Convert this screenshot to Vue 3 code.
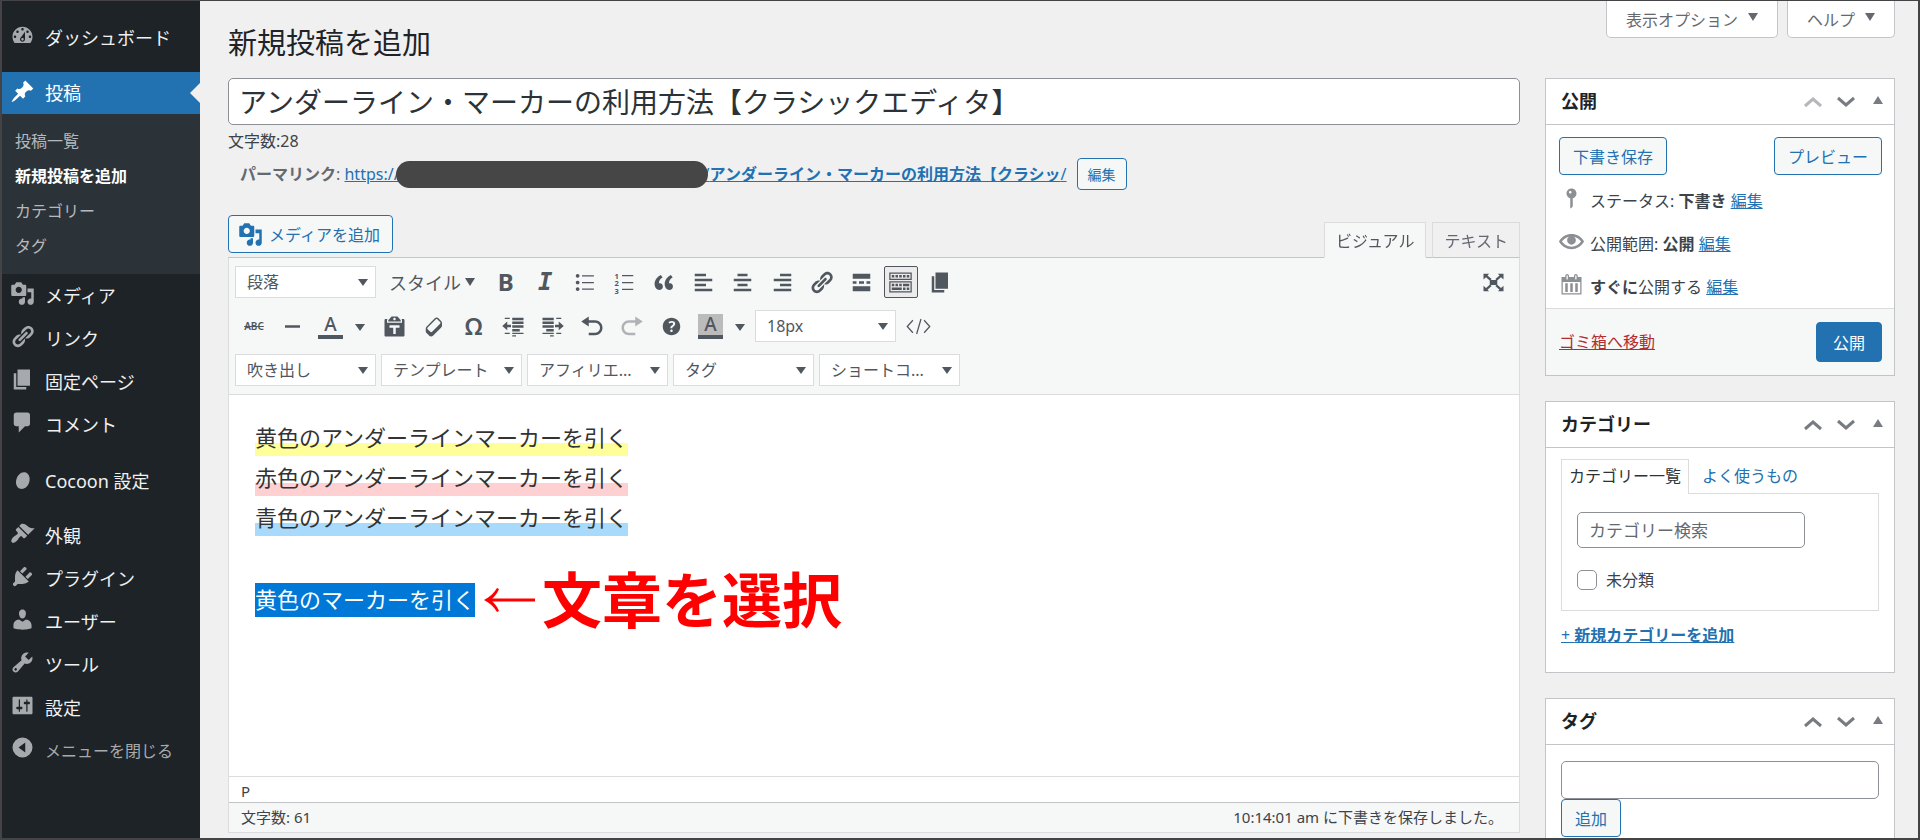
<script setup>
import { ref } from 'vue'

const icons = {
  dashboard: 'M3.76 16h12.48c1.1-1.37 1.76-3.11 1.76-5 0-4.42-3.58-8-8-8s-8 3.58-8 8c0 1.89.66 3.63 1.76 5zM10 4c.55 0 1 .45 1 1s-.45 1-1 1-1-.45-1-1 .45-1 1-1zM6 6c.55 0 1 .45 1 1s-.45 1-1 1-1-.45-1-1 .45-1 1-1zm8 0c.55 0 1 .45 1 1s-.45 1-1 1-1-.45-1-1 .45-1 1-1zm-5.37 5.55L12 7v6c0 1.1-.9 2-2 2s-2-.9-2-2c0-.57.24-1.08.63-1.45zM4 10c.55 0 1 .45 1 1s-.45 1-1 1-1-.45-1-1 .45-1 1-1zm12 0c.55 0 1 .45 1 1s-.45 1-1 1-1-.45-1-1 .45-1 1-1zm-5 3c0-.55-.45-1-1-1s-1 .45-1 1 .45 1 1 1 1-.45 1-1z',
  post: 'M10.44 3.02l1.82-1.82 6.36 6.35-1.83 1.82c-1.05-.68-2.48-.57-3.41.36l-.75.75c-.92.93-1.04 2.35-.35 3.41l-1.83 1.82-2.41-2.41-2.8 2.79c-.42.42-3.38 2.71-3.8 2.29s1.86-3.39 2.28-3.81l2.79-2.79L4.1 9.36l1.83-1.82c1.05.69 2.48.57 3.4-.36l.75-.75c.93-.92 1.05-2.35.36-3.41z',
  media: 'M13 11V4c0-.55-.45-1-1-1h-1.67L9 1H5L3.67 3H2c-.55 0-1 .45-1 1v7c0 .55.45 1 1 1h10c.55 0 1-.45 1-1zM7 4.5c1.38 0 2.5 1.12 2.5 2.5S8.38 9.5 7 9.5 4.5 8.38 4.5 7 5.62 4.5 7 4.5zM14 6h5v10.5c0 1.38-1.12 2.5-2.5 2.5S14 17.88 14 16.5s1.12-2.5 2.5-2.5c.17 0 .34.02.5.05V9h-3V6zm-4 8.05V13h2v3.5c0 1.38-1.12 2.5-2.5 2.5S7 17.88 7 16.5 8.12 14 9.5 14c.17 0 .34.02.5.05z',
  link: 'M17.74 2.76c1.68 1.69 1.68 4.41 0 6.1l-1.53 1.52c-1.12 1.12-2.7 1.47-4.14 1.09l2.62-2.61.76-.77.76-.76c.84-.84.84-2.2 0-3.04-.84-.85-2.2-.85-3.04 0l-.77.76-3.38 3.38c-.37-1.44-.02-3.02 1.1-4.14l1.52-1.53c1.69-1.68 4.42-1.68 6.1 0zM8.59 13.43l5.34-5.34c.42-.42.42-1.1 0-1.52-.44-.43-1.13-.39-1.53 0l-5.33 5.34c-.42.42-.42 1.1 0 1.52.44.43 1.13.39 1.52 0zm-.76 2.29l4.14-4.15c.38 1.44.03 3.02-1.09 4.14l-1.52 1.53c-1.69 1.68-4.41 1.68-6.1 0-1.68-1.68-1.68-4.42 0-6.1l1.53-1.52c1.12-1.12 2.7-1.47 4.14-1.1l-4.14 4.15c-.85.84-.85 2.2 0 3.05.84.84 2.2.84 3.04 0z',
  page: 'M6 15V2h10v13H6zm-1 1h8v2H3V5h2v11z',
  comment: 'M5 2h9c1.1 0 2 .9 2 2v7c0 1.1-.9 2-2 2h-2l-5 5v-5H5c-1.1 0-2-.9-2-2V4c0-1.1.9-2 2-2z',
  cocoon: 'M12.5 2.2c3.4 1 5 4.600 4.100 8.800-1 4.600-4.700 7.700-8.300 6.900C4.700 17 3.100 13.400 4.100 9.200 5.100 4.600 9 1.200 12.500 2.200z',
  appearance: 'M14.48 11.06L7.41 3.99l1.5-1.5c.5-.56 2.3-.47 3.51.32 1.21.8 1.43 1.28 2.91 2.1 1.18.64 2.45 1.26 4.45.85zm-.71.71L6.7 4.7 4.93 6.47c-.39.39-.39 1.02 0 1.41l1.06 1.06c.39.39.39 1.03 0 1.42-.6.6-1.43 1.11-2.21 1.69-.35.26-.7.53-1.01.84C1.43 14.23.4 16.08 1.4 17.07c.99 1 2.84-.03 4.18-1.36.31-.31.58-.66.85-1.02.57-.78 1.08-1.61 1.69-2.21.39-.39 1.02-.39 1.41 0l1.06 1.06c.39.39 1.02.39 1.41 0z',
  plugin: 'M13.11 4.36L9.87 7.6 8 5.73l3.24-3.24c.35-.34 1.05-.2 1.56.32.52.51.66 1.21.31 1.55zm-8 1.77l.91-1.12 9.01 9.01-1.19.84c-.71.71-2.63 1.16-3.82 1.16H6.14L4.9 17.26c-.59.59-1.54.59-2.12 0-.59-.58-.59-1.53 0-2.12l1.24-1.24v-3.88c0-1.13.4-3.19 1.09-3.89zm7.26 3.97l3.24-3.24c.34-.35 1.04-.21 1.55.31.52.51.66 1.21.31 1.55l-3.24 3.25z',
  user: 'M10 9.25c-2.27 0-2.73-3.44-2.73-3.44C7 4.02 7.82 2 9.97 2c2.16 0 2.98 2.02 2.71 3.81 0 0-.41 3.44-2.68 3.44zm0 2.57L12.72 10c2.39 0 4.52 2.33 4.52 4.53v2.49s-3.65 1.13-7.24 1.13c-3.65 0-7.24-1.13-7.24-1.13v-2.49c0-2.25 1.94-4.48 4.47-4.48z',
  tool: 'M16.68 9.77c-1.34 1.34-3.3 1.67-4.95.99l-5.41 6.52c-.99.99-2.59.99-3.58 0s-.99-2.59 0-3.57l6.52-5.42c-.68-1.65-.35-3.61.99-4.95 1.28-1.28 3.12-1.62 4.72-1.06l-2.89 2.89 2.82 2.82 2.86-2.87c.53 1.58.18 3.39-1.08 4.65zM3.81 16.21c.4.39 1.04.39 1.43 0 .4-.4.4-1.04 0-1.43-.39-.4-1.03-.4-1.43 0-.39.39-.39 1.03 0 1.43z',
  settings: 'M18 16V4c0-.55-.45-1-1-1H3c-.55 0-1 .45-1 1v12c0 .55.45 1 1 1h14c.55 0 1-.45 1-1zM8 11h1c.55 0 1 .45 1 1s-.45 1-1 1H8v1.5c0 .28-.22.5-.5.5s-.5-.22-.5-.5V13H6c-.55 0-1-.45-1-1s.45-1 1-1h1V5.500c0-.28.22-.5.5-.5s.5.22.5.5V11zm5-2h-1c-.55 0-1-.45-1-1s.45-1 1-1h1V5.500c0-.28.22-.5.5-.5s.5.22.5.5V7h1c.55 0 1 .45 1 1s-.45 1-1 1h-1v5.500c0 .28-.22.5-.5.5s-.5-.22-.5-.5V9z',
  collapse: 'M10 2a8 8 0 1 0 0 16 8 8 0 0 0 0-16zM12.200 6v8L6.800 10z',
  bullets: 'M4.500 3.200a1.500 1.500 0 1 0 .01 0zM4.500 8.500a1.500 1.500 0 1 0 .01 0zM4.500 13.800a1.500 1.500 0 1 0 .01 0zM8 4.200h9.500v1H8zM8 9.500h9.500v1H8zM8 14.800h9.500v1H8z',
  quote: 'M9.49 13.22c0-.74-.2-1.38-.61-1.9-.62-.78-1.83-.88-2.53-.72-.29-1.65 1.11-3.75 2.92-4.65L7.88 4c-2.73 1.3-5.42 4.28-4.96 8.05C3.21 14.43 4.59 16 6.54 16c.85 0 1.56-.25 2.12-.75s.83-1.18.83-2.03zm8.05 0c0-.74-.2-1.38-.61-1.9-.63-.78-1.83-.88-2.53-.72-.29-1.65 1.11-3.75 2.92-4.65L15.93 4c-2.73 1.3-5.41 4.28-4.95 8.05.29 2.38 1.66 3.95 3.61 3.95.85 0 1.56-.25 2.12-.75s.83-1.18.83-2.03z',
  left: 'M12 5V3H3v2h9zm5 4V7H3v2h14zm-5 4v-2H3v2h9zm5 4v-2H3v2h14z',
  center: 'M14 5V3H6v2h8zm3 4V7H3v2h14zm-3 4v-2H6v2h8zm3 4v-2H3v2h14z',
  right: 'M17 5V3H8v2h9zm0 4V7H3v2h14zm0 4v-2H8v2h9zm0 4v-2H3v2h14z',
  more: 'M17 7V3H3v4h14zM6 11V9H3v2h3zm6 0V9H8v2h4zm5 0V9h-3v2h3zm0 6v-4H3v4h14z',
  sink: 'M19 2v6H1V2h18zm-1 5V3H2v4h16zM5 4v2H3V4h2zm3 0v2H6V4h2zm3 0v2H9V4h2zm3 0v2h-2V4h2zm3 0v2h-2V4h2zm2 5v9H1V9h18zm-1 8v-7H2v7h16zM5 11v2H3v-2h2zm3 0v2H6v-2h2zm3 0v2H9v-2h2zm6 0v2h-5v-2h5zm-6 3v2H3v-2h8zm3 0v2h-2v-2h2zm3 0v2h-2v-2h2z',
  hr: 'M4 9h12v2H4z',
  paste: 'M12.38 2L15 5v1H5V5l2.64-3h4.74zM10 5c.55 0 1-.44 1-1 0-.55-.45-1-1-1s-1 .45-1 1c0 .56.45 1 1 1zm5.45-1H17c.55 0 1 .45 1 1v12c0 .56-.45 1-1 1H3c-.55 0-1-.44-1-1V5c0-.55.45-1 1-1h1.55L4 4.63V7h12V4.63zM14 11V9H6v2h3v5h2v-5h3z',
  eraser: 'M14.29 4.59l1.1 1.11c.41.4.61.94.61 1.47v2.12c0 .53-.2 1.07-.61 1.47l-6.63 6.63c-.4.41-.94.61-1.47.61s-1.07-.2-1.47-.61l-1.11-1.1-1.1-1.11c-.41-.4-.61-.94-.61-1.47v-2.12c0-.54.2-1.07.61-1.48l6.63-6.62c.4-.41.94-.61 1.47-.61s1.060.2 1.47.61zm-6.21 9.700l6.420-6.420c.39-.39.39-1.030 0-1.430L12.360 4.300c-.19-.19-.45-.29-.72-.29s-.52.1-.71.29l-6.420 6.420c-.39.4-.39 1.040 0 1.430l2.140 2.140c.38.38 1.040.38 1.430 0z',
  outdent: 'M3 3h4v1H3zM9 3h9v2H9zM9 6h9v2H9zM9 9h9v2H9zM9 12h6v2H9zM3 15h4v1H3zM9 15h9v1H9zM9 17h3v1H9zM1 9.500L5 6v2.500h3v2H5V13z',
  indent: 'M13 3h4v1h-4zM2 3h9v2H2zM2 6h9v2H2zM2 9h9v2H2zM5 12h6v2H5zM13 15h4v1h-4zM2 15h9v1H2zM8 17h3v1H8zM19 9.500L15 6v2.500h-3v2h3V13z',
  undo: 'M12 5H7V2L1 6l6 4V7h5c2.200 0 4 1.800 4 4s-1.800 4-4 4H7v2h5c3.300 0 6-2.700 6-6s-2.700-6-6-6z',
  redo: 'M8 5h5V2l6 4-6 4V7H8c-2.200 0-4 1.800-4 4s1.800 4 4 4h5v2H8c-3.300 0-6-2.700-6-6s2.700-6 6-6z',
  help: 'M17 10c0-3.87-3.14-7-7-7-3.87 0-7 3.13-7 7s3.13 7 7 7c3.86 0 7-3.13 7-7zm-6.300 1.480H9.140v-.43c0-.38.08-.7.24-.98s.46-.57.88-.89c.41-.29.68-.53.81-.71.14-.18.2-.39.2-.62 0-.25-.09-.44-.28-.58-.19-.13-.45-.19-.79-.19-.58 0-1.250.19-2 .57l-.64-1.280c.87-.49 1.800-.74 2.770-.74.81 0 1.450.2 1.920.58.48.39.71.91.71 1.550 0 .43-.09.8-.29 1.110-.19.32-.57.67-1.110 1.060-.38.28-.61.49-.71.63-.1.15-.15.34-.15.57v.35zm-1.470 2.740c-.18-.17-.27-.42-.27-.73 0-.33.08-.58.26-.75s.43-.25.77-.25c.32 0 .57.09.75.26s.27.42.27.74c0 .3-.09.55-.27.72-.18.18-.43.27-.75.27-.33 0-.58-.09-.76-.26z',
  fullscreen: 'M7 8h6v4H7zM2 3h4.500L5.200 4.300 8.500 7.200 7.200 8.500 4 5.700 2 7.500zM18 3v4.500l-2-1.800-3.200 2.800-1.300-1.300 3.300-2.900L13.500 3zM2 17v-4.500l2 1.800 3.200-2.800 1.300 1.300-3.300 2.900L6.500 17zM18 17h-4.500l1.300-1.300-3.300-2.900 1.300-1.300 3.200 2.800 2-1.800z',
  pin: 'M14 6c0 1.860-1.280 3.410-3 3.860V16c0 1-2 2-2 2V9.860c-1.720-.45-3-2-3-3.860 0-2.210 1.790-4 4-4s4 1.790 4 4zM8 5c0 .55.45 1 1 1s1-.45 1-1-.45-1-1-1-1 .45-1 1z',
  eye: 'M19.700 9.400C17.700 6 14 3.900 10 3.900S2.300 6 .3 9.400L0 10l.3.6c2 3.400 5.700 5.500 9.700 5.500s7.700-2.100 9.700-5.500l.3-.6-.3-.6zM10 14.100c-3.100 0-6-1.600-7.700-4.100C3.600 8 5.700 6.600 8 6.100c-.9.6-1.500 1.700-1.500 2.900 0 1.900 1.600 3.500 3.500 3.500s3.500-1.600 3.500-3.500c0-1.200-.6-2.300-1.500-2.900 2.300.5 4.400 1.900 5.700 3.900-1.700 2.500-4.600 4.100-7.700 4.100z',
  calendar: 'M15 4h3v14H2V4h3V3c0-.83.67-1.500 1.500-1.500S8 2.170 8 3v1h4V3c0-.83.67-1.500 1.500-1.500S15 2.170 15 3v1zM6 3v2.500c0 .28.22.5.5.5s.5-.22.5-.5V3c0-.28-.22-.5-.5-.5S6 2.720 6 3zm7 0v2.500c0 .28.22.5.5.5s.5-.22.5-.5V3c0-.28-.22-.5-.5-.5s-.5.22-.5.5zm4 14V8H3v9h14zM7 16V9H5v7h2zm4 0V9H9v7h2zm4 0V9h-2v7h2z'
}

const submenu = ['投稿一覧', '新規投稿を追加', 'カテゴリー', 'タグ']
const menuTop = [
  ['media', 'メディア'],
  ['link', 'リンク'],
  ['page', '固定ページ'],
  ['comment', 'コメント']
]
const menuBottom = [
  ['appearance', '外観'],
  ['plugin', 'プラグイン'],
  ['user', 'ユーザー'],
  ['tool', 'ツール'],
  ['settings', '設定']
]
const row1 = [
  ['bold', '太字'], ['italic', 'イタリック'], ['bullets', '番号なしリスト'], ['numbers', '番号付きリスト'],
  ['quote', '引用'], ['left', '左寄せ'], ['center', '中央揃え'], ['right', '右寄せ'], ['link', 'リンクの挿入'],
  ['more', '「続きを読む」タグを挿入'], ['sink', 'ツールバー切り替え'], ['page', 'ページ区切り']
]
const row2 = [
  ['paste', 'テキストとしてペースト'], ['eraser', '書式設定をクリア'], ['omega', '特殊文字'], ['outdent', 'インデントを減らす'],
  ['indent', 'インデントを増やす'], ['undo', '取り消し'], ['redo', 'やり直し'], ['help', 'ヘルプ']
]
const dropdowns = ['吹き出し', 'テンプレート', 'アフィリエ...', 'タグ', 'ショートコ...']
const glyphs = { bold: 'B', italic: 'I', omega: 'Ω' }

const title = ref('アンダーライン・マーカーの利用方法【クラシックエディタ】')
const search = ref('')
const tag = ref('')
const uncategorized = ref(false)
</script>

<template>
  <div class="admin">
    <nav class="menu" aria-label="メインメニュー">
      <a class="item first" href="#">
        <svg class="ico" viewBox="0 0 20 20"><path :d="icons.dashboard" /></svg><span>ダッシュボード</span>
      </a>
      <a class="item current" href="#">
        <svg class="ico" viewBox="0 0 20 20"><path :d="icons.post" /></svg><span>投稿</span>
      </a>
      <div class="submenu">
        <a v-for="s in submenu" :key="s" href="#" :class="{ on: s === '新規投稿を追加' }">{{ s }}</a>
      </div>
      <a v-for="m in menuTop" :key="m[0]" class="item" href="#">
        <svg class="ico" viewBox="0 0 20 20"><path :d="icons[m[0]]" /></svg><span>{{ m[1] }}</span>
      </a>
      <a class="item cocoon" href="#">
        <svg class="ico" viewBox="0 0 20 20"><path :d="icons.cocoon" /></svg><span>Cocoon 設定</span>
      </a>
      <a v-for="m in menuBottom" :key="m[0]" class="item" href="#">
        <svg class="ico" viewBox="0 0 20 20"><path :d="icons[m[0]]" /></svg><span>{{ m[1] }}</span>
      </a>
      <button class="item collapse" type="button">
        <svg class="ico" viewBox="0 0 20 20"><path fill-rule="evenodd" :d="icons.collapse" /></svg><span>メニューを閉じる</span>
      </button>
    </nav>

    <div class="content">
      <header class="top">
        <h1>新規投稿を追加</h1>
        <div class="screen-tabs">
          <button type="button">表示オプション<i class="down"></i></button>
          <button type="button">ヘルプ<i class="down"></i></button>
        </div>
      </header>

      <div class="columns">
        <main class="primary">
          <input v-model="title" class="title" type="text" aria-label="タイトルを追加">
          <p class="count">文字数:28</p>
          <div class="permalink">
            <span><strong>パーマリンク</strong>:&nbsp;</span>
            <a href="#">https://</a>
            <span class="redacted"></span>
            <a href="#">/<b>アンダーライン・マーカーの利用方法【クラシッ</b>/</a>
            <button class="btn small" type="button">編集</button>
          </div>

          <div class="editor-head">
            <button class="btn media" type="button">
              <svg class="ico" viewBox="0 0 20 20"><path :d="icons.media" /></svg>メディアを追加
            </button>
            <div class="tabs">
              <button class="active" type="button">ビジュアル</button>
              <button type="button">テキスト</button>
            </div>
          </div>

          <section class="editor">
            <div class="toolbar">
              <div class="row">
                <label class="select"><select aria-label="段落形式"><option>段落</option></select></label>
                <button class="style" type="button">スタイル<i class="down"></i></button>
                <div class="group twelve">
                  <button v-for="b in row1" :key="b[0]" type="button" :class="['tb', { pressed: b[0] === 'sink' }]" :aria-label="b[1]">
                    <span v-if="glyphs[b[0]]" :class="['glyph', b[0]]">{{ glyphs[b[0]] }}</span>
                    <svg v-else-if="b[0] === 'numbers'" class="ico" viewBox="0 0 20 20">
                      <path d="M8 4h9v1H8zM8 9.500h9v1H8zM8 15h9v1H8z" />
                      <text x="2" y="7">1</text><text x="2" y="13">2</text><text x="2" y="19">3</text>
                    </svg>
                    <svg v-else class="ico" viewBox="0 0 20 20"><path :d="icons[b[0]]" /></svg>
                  </button>
                </div>
                <button class="tb full" type="button" aria-label="集中執筆モード">
                  <svg class="ico" viewBox="0 0 20 20"><path :d="icons.fullscreen" /></svg>
                </button>
              </div>

              <div class="row second">
                <div class="group two">
                  <button class="tb" type="button" aria-label="打ち消し"><span class="abc">ABC</span></button>
                  <button class="tb" type="button" aria-label="横ライン"><svg class="ico" viewBox="0 0 20 20"><path :d="icons.hr" /></svg></button>
                </div>
                <button class="split" type="button" aria-label="テキスト色"><span class="swatch">A</span><i class="down"></i></button>
                <div class="group eight">
                  <button v-for="b in row2" :key="b[0]" type="button" :class="['tb', { faded: b[0] === 'redo' }]" :aria-label="b[1]">
                    <span v-if="glyphs[b[0]]" :class="['glyph', b[0]]">{{ glyphs[b[0]] }}</span>
                    <svg v-else class="ico" viewBox="0 0 20 20"><path :d="icons[b[0]]" /></svg>
                  </button>
                </div>
                <button class="split" type="button" aria-label="背景色"><span class="swatch filled">A</span><i class="down"></i></button>
                <label class="select"><select aria-label="フォントサイズ"><option>18px</option></select></label>
                <button class="tb code" type="button" aria-label="ソースコード">
                  <svg class="ico" viewBox="0 0 20 20"><path d="M5.500 5L1 10l4.500 5M14.500 5l4.500 5-4.500 5M12 4L8.500 16" /></svg>
                </button>
              </div>

              <div class="row">
                <label v-for="d in dropdowns" :key="d" class="select"><select :aria-label="d"><option>{{ d }}</option></select></label>
              </div>
            </div>

            <div class="canvas">
              <p><span class="mark yellow">黄色のアンダーラインマーカーを引く</span></p>
              <p><span class="mark red">赤色のアンダーラインマーカーを引く</span></p>
              <p><span class="mark blue">青色のアンダーラインマーカーを引く</span></p>
              <p>&nbsp;</p>
              <p class="pick">
                <span class="selected">黄色のマーカーを引く</span>
                <span class="note">
                  <svg viewBox="0 0 52 26"><path d="M3 13h48" /><path class="head" d="M0 13C6 10 10 6 13 1l2 1c-2 5-5 8-8 11 3 3 6 6 8 11l-2 1C10 20 6 16 0 13z" /></svg>
                  <strong>文章を選択</strong>
                </span>
              </p>
            </div>

            <div class="path">P</div>
            <footer class="status"><span>文字数: 61</span><span>10:14:01 am に下書きを保存しました。</span></footer>
          </section>
        </main>

        <aside class="side">
          <section class="box">
            <header>
              <h2>公開</h2>
              <button class="arrow dim" type="button" aria-label="上に移動"><svg viewBox="0 0 20 12"><path d="M2 10l8-7 8 7" /></svg></button>
              <button class="arrow" type="button" aria-label="下に移動"><svg viewBox="0 0 20 12"><path d="M2 2l8 7 8-7" /></svg></button>
              <button class="arrow" type="button" aria-label="開閉"><i class="up"></i></button>
            </header>
            <div class="publish">
              <div class="between">
                <button class="btn" type="button">下書き保存</button>
                <button class="btn" type="button">プレビュー</button>
              </div>
              <p><svg class="ico" viewBox="0 0 20 20"><path :d="icons.pin" /></svg><span>ステータス: <b>下書き</b> <a href="#">編集</a></span></p>
              <p><svg class="ico" viewBox="0 0 20 20"><path :d="icons.eye" /></svg><span>公開範囲: <b>公開</b> <a href="#">編集</a></span></p>
              <p><svg class="ico" viewBox="0 0 20 20"><path :d="icons.calendar" /></svg><span><b>すぐに</b>公開する <a href="#">編集</a></span></p>
            </div>
            <div class="actions between">
              <a class="trash" href="#">ゴミ箱へ移動</a>
              <button class="btn main" type="button">公開</button>
            </div>
          </section>

          <section class="box">
            <header>
              <h2>カテゴリー</h2>
              <button class="arrow" type="button" aria-label="上に移動"><svg viewBox="0 0 20 12"><path d="M2 10l8-7 8 7" /></svg></button>
              <button class="arrow" type="button" aria-label="下に移動"><svg viewBox="0 0 20 12"><path d="M2 2l8 7 8-7" /></svg></button>
              <button class="arrow" type="button" aria-label="開閉"><i class="up"></i></button>
            </header>
            <div class="inside">
              <div class="cat-tabs">
                <a class="active" href="#">カテゴリー一覧</a>
                <a href="#">よく使うもの</a>
              </div>
              <div class="cat-panel">
                <input v-model="search" type="search" placeholder="カテゴリー検索" aria-label="カテゴリー検索">
                <label class="check"><input v-model="uncategorized" type="checkbox">未分類</label>
              </div>
              <a class="add" href="#">+ <b>新規カテゴリーを追加</b></a>
            </div>
          </section>

          <section class="box">
            <header>
              <h2>タグ</h2>
              <button class="arrow" type="button" aria-label="上に移動"><svg viewBox="0 0 20 12"><path d="M2 10l8-7 8 7" /></svg></button>
              <button class="arrow" type="button" aria-label="下に移動"><svg viewBox="0 0 20 12"><path d="M2 2l8 7 8-7" /></svg></button>
              <button class="arrow" type="button" aria-label="開閉"><i class="up"></i></button>
            </header>
            <div class="inside tags">
              <input v-model="tag" type="text" aria-label="新規タグを追加">
              <button class="btn" type="button">追加</button>
            </div>
          </section>
        </aside>
      </div>
    </div>
    <div class="frame"></div>
  </div>
</template>

<style>
body { background: #f0f0f1; }
</style>

<style scoped>
.admin, .admin * { box-sizing: border-box; }
.admin {
  display: flex;
  height: 100vh;
  overflow: hidden;
  background: #f0f0f1;
  color: #3c434a;
  font: 16px/24px "Noto Sans", "Noto Sans CJK JP", sans-serif;
}
button, input, select { font-family: inherit; margin: 0; }
button { cursor: pointer; white-space: nowrap; }
h1, h2, p { margin: 0; }
a { color: #2271b1; }
.frame { position: fixed; inset: 0; border: 2px solid #444446; border-width: 1px 2px 2px; pointer-events: none; }
.ico { width: 25px; height: 25px; flex: none; fill: currentColor; }
.down, .up { display: inline-block; border: 5px solid transparent; }
.down { border-top: 8px solid currentColor; border-bottom: 0; }
.up { border-bottom: 8px solid currentColor; border-top: 0; margin-bottom: 4px; }

.menu { flex: none; width: 200px; padding-top: 17px; background: #1d2327; }
.item {
  position: relative;
  display: flex;
  align-items: center;
  gap: 10px;
  width: 100%;
  height: 43px;
  padding: 0 10px;
  border: 0;
  background: none;
  color: #f0f0f1;
  font-size: 18px;
  text-decoration: none;
  white-space: nowrap;
}
.item .ico { color: #a7aaad; margin-bottom: 4px; }
.first { margin-bottom: 14px; height: 41px; }
.current { height: 42px; background: #2271b1; color: #fff; }
.current .ico { color: #fff; }
.current::after {
  content: "";
  position: absolute;
  right: 0;
  border: 10px solid transparent;
  border-left: 0;
  border-right-color: #f0f0f1;
}
.submenu { display: flex; flex-direction: column; padding: 10px 15px; background: #2c3338; }
.submenu a { height: 35px; line-height: 35px; color: #b4b9be; text-decoration: none; }
.submenu .on { color: #fff; font-weight: 700; }
.cocoon { margin: 13px 0 12px; }
.cocoon .ico { padding: 2px; margin-bottom: 0; }
.collapse { height: 41px; color: #a7aaad; font-size: 16px; }

.content { flex: 1; min-width: 0; padding: 0 25px 0 28px; }
.top { display: flex; justify-content: space-between; align-items: flex-start; height: 78px; }
h1 { padding-top: 23px; font-size: 29px; line-height: 40px; font-weight: 400; color: #1d2327; }
.screen-tabs { display: flex; gap: 9px; }
.screen-tabs button {
  display: flex;
  align-items: center;
  gap: 10px;
  height: 38px;
  padding: 0 19px;
  border: 1px solid #c3c4c7;
  border-top: 0;
  border-radius: 0 0 5px 5px;
  background: #fff;
  color: #646970;
  font-size: 16px;
}
.screen-tabs .down { margin-bottom: 4px; }
.columns { display: grid; grid-template-columns: minmax(0, 1fr) 350px; gap: 25px; }

.title {
  display: block;
  width: 100%;
  height: 47px;
  padding: 0 10px 2px;
  border: 1px solid #8c8f94;
  border-radius: 5px;
  background: #fff;
  color: #2c3338;
  font-size: 28px;
}
.count { padding: 4px 0 5px; }
.permalink { display: flex; align-items: center; height: 32px; padding-left: 12px; color: #646970; white-space: nowrap; }
.redacted { position: relative; flex: none; width: 312px; height: 27px; margin: 0 -4px; border-radius: 14px; background: #464646; }
.btn {
  height: 38px;
  padding: 0 13px;
  border: 1px solid #2271b1;
  border-radius: 4px;
  background: #f6f7f7;
  color: #2271b1;
  font-size: 16px;
}
.small { height: 32px; margin-left: 10px; padding: 0 10px; font-size: 14px; }
.main { height: 40px; padding: 0 16px; background: #2271b1; color: #fff; }
.editor-head { display: flex; justify-content: space-between; padding-top: 25px; height: 68px; }
.media { display: flex; align-items: center; gap: 6px; padding: 0 12px 0 9px; }
.tabs { display: flex; align-items: flex-end; gap: 6px; z-index: 1; }
.tabs button {
  height: 36px;
  padding: 0 11px;
  border: 1px solid #dcdcde;
  border-bottom-color: #c3c4c7;
  background: #f0f0f1;
  color: #646970;
  font-size: 16px;
}
.tabs .active { background: #f6f7f7; border-bottom-color: #f6f7f7; color: #50575e; }

.editor { margin-top: -1px; border: 1px solid #dcdcde; border-top-color: #c3c4c7; background: #fff; }
.toolbar {
  display: flex;
  flex-direction: column;
  gap: 12px;
  padding: 8px 6px;
  border-bottom: 1px solid #dcdcde;
  background: #f6f7f7;
  color: #50575e;
}
.row { display: flex; align-items: center; gap: 5px; height: 32px; }
.second { gap: 0; }
.select { position: relative; width: 141px; height: 32px; }
.select select {
  width: 100%;
  height: 100%;
  padding: 0 11px;
  border: 1px solid #dcdcde;
  border-radius: 0;
  appearance: none;
  background: #fff;
  color: #50575e;
  font-size: 16px;
}
.select::after {
  content: "";
  position: absolute;
  right: 8px;
  top: 13px;
  border: 5px solid transparent;
  border-top: 7px solid #50575e;
  border-bottom: 0;
  pointer-events: none;
}
.style {
  display: flex;
  align-items: center;
  gap: 4px;
  padding: 0 8px;
  width: 100px;
  border: 0;
  background: none;
  color: #50575e;
  font-size: 18px;
}
.group { display: grid; justify-items: center; }
.twelve { width: 474px; grid-template-columns: repeat(12, 1fr); }
.two { width: 76px; grid-template-columns: repeat(2, 1fr); }
.eight { width: 316px; grid-template-columns: repeat(8, 1fr); }
.tb {
  display: flex;
  align-items: center;
  justify-content: center;
  width: 34px;
  height: 32px;
  padding: 0;
  border: 1px solid transparent;
  border-radius: 2px;
  background: none;
  color: #50575e;
}
.tb text { font: 700 6px "Noto Sans", sans-serif; }
.pressed { border-color: #50575e; background: #ebebeb; }
.faded { color: #b0b3b6; }
.full { margin-left: auto; margin-right: 3px; }
.glyph { font-size: 24px; line-height: 30px; font-weight: 700; }
.italic { font-family: "DejaVu Sans Mono", monospace; font-style: italic; }
.omega { font-weight: 600; }
.abc { font-size: 10px; text-decoration: line-through; font-weight: 600; }
.split { display: flex; align-items: center; padding: 0 0 0 7px; width: 64px; border: 0; background: none; color: #50575e; }
.split .down { margin-left: 12px; margin-top: 3px; border-top-width: 7px; }
.swatch { width: 25px; height: 25px; border-bottom: 4px solid #50575e; font-size: 19px; line-height: 21px; font-weight: 500; text-align: center; }
.filled { background: #bbb; }
.code { margin-left: 5px; }
.code path { fill: none; stroke: currentColor; }

.canvas { min-height: 381px; padding: 25px 26px; color: #333; font-size: 22px; line-height: 40px; }
.mark { display: inline-block; height: 36px; line-height: 35px; vertical-align: top; }
.canvas p { height: 40px; white-space: nowrap; }
.yellow { background: linear-gradient(transparent 23px, #ffff99 23px); }
.red { background: linear-gradient(transparent 23px, #ffd0d1 23px); }
.blue { background: linear-gradient(transparent 23px, #a8dafb 23px); }
.pick { display: flex; align-items: center; }
.selected { height: 34px; line-height: 32px; background: #0078d7; color: #fff; }
.note { display: flex; align-items: center; gap: 6px; margin-left: 9px; color: #f00; }
.note svg { width: 52px; height: 26px; fill: none; stroke: currentColor; stroke-width: 3; }
.note .head { fill: currentColor; stroke: none; }
.note strong { font-size: 60px; line-height: 40px; }
.path { height: 26px; padding: 0 12px; border-top: 1px solid #dcdcde; font-size: 15px; line-height: 28px; }
.status {
  display: flex;
  justify-content: space-between;
  height: 30px;
  padding: 0 16px 0 12px;
  border-top: 1px solid #c3c4c7;
  background: #f6f7f7;
  font-size: 15px;
  line-height: 29px;
}

.side { display: flex; flex-direction: column; gap: 25px; }
.box { border: 1px solid #c3c4c7; background: #fff; }
.box header { display: flex; align-items: center; height: 46px; padding: 0 7px 0 15px; border-bottom: 1px solid #c3c4c7; }
h2 { flex: 1; font-size: 18px; line-height: 25px; font-weight: 700; color: #1d2327; }
.arrow { display: flex; align-items: center; justify-content: center; width: 33px; height: 30px; padding: 0; border: 0; background: none; color: #787c82; }
.arrow:last-child { width: 18px; margin-left: 7px; }
.arrow svg { width: 20px; height: 12px; fill: none; stroke: currentColor; stroke-width: 3; }
.dim { color: #b5b7ba; }
.between { display: flex; align-items: center; justify-content: space-between; }
.publish { padding: 12px 12px 0 13px; }
.publish p { display: flex; align-items: center; gap: 6px; height: 43px; }
.publish p .ico { color: #8c8f94; margin-bottom: 4px; }
.publish .between + p { margin-top: 4px; }
.actions { height: 67px; padding: 0 12px 0 13px; border-top: 1px solid #dcdcde; background: #f6f7f7; }
.trash { color: #b32d2e; }
.inside { padding: 11px 15px 25px; }
.cat-tabs { display: flex; }
.cat-tabs a { position: relative; height: 34px; padding: 0 7px; border: 1px solid transparent; border-bottom: 0; line-height: 33px; text-decoration: none; }
.cat-tabs .active { margin: 0 5px -1px 0; height: 35px; border-color: #dcdcde; background: #fff; color: #2c3338; }
.cat-panel { display: flex; flex-direction: column; align-items: flex-start; gap: 20px; height: 118px; padding: 18px 15px; border: 1px solid #dcdcde; }
.inside input[type="search"], .inside input[type="text"] {
  width: 228px;
  max-width: 100%;
  height: 38px;
  padding: 0 11px;
  border: 1px solid #8c8f94;
  border-radius: 5px;
  background: #fff;
  color: #2c3338;
  font-size: 17px;
}
.inside input::placeholder { color: #646970; opacity: 1; }
.check { display: flex; align-items: center; gap: 9px; }
.check input { width: 20px; height: 20px; appearance: none; border: 1px solid #8c8f94; border-radius: 5px; background: #fff; }
.add { display: block; width: max-content; margin-top: 12px; }
.inside.tags { display: flex; flex-direction: column; align-items: flex-start; padding-top: 16px; }
.inside.tags input[type="text"] { width: 100%; }
</style>
